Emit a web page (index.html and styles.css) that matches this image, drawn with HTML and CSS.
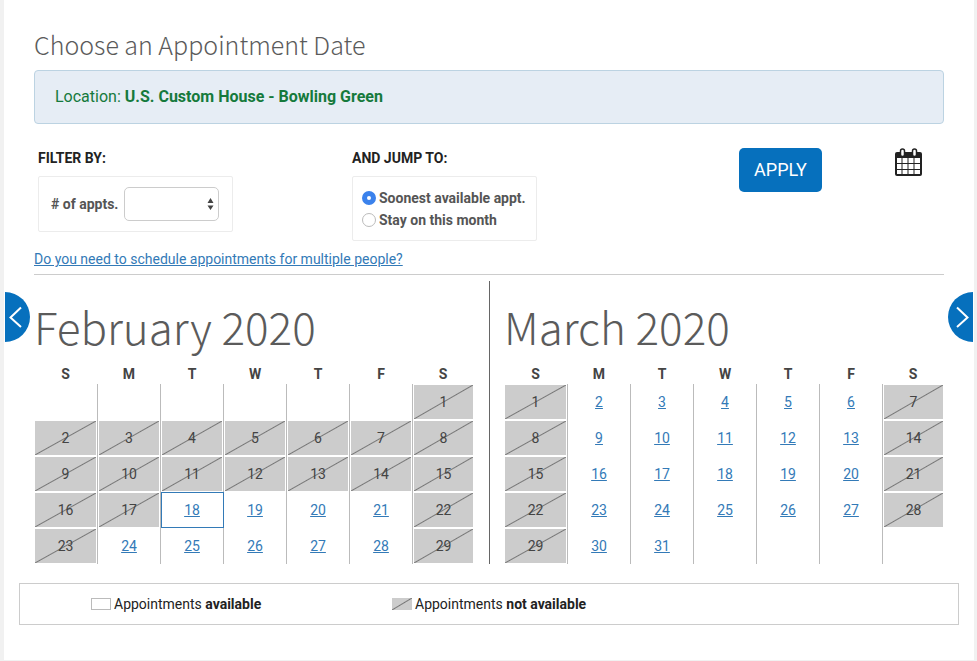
FILE: index.html
```html
<!DOCTYPE html>
<html lang="en">
<head>
    <meta charset="UTF-8">
    <meta name="viewport" content="width=device-width, initial-scale=1.0">
    <title>Choose an Appointment Date</title>
    <link rel="stylesheet" href="styles.css">
</head>
<body>

<main class="page">
    <h1>Choose an Appointment Date</h1>

    <div class="location">Location: <strong>U.S. Custom House - Bowling Green</strong></div>

    <form class="filters">
        <div class="filter-group">
            <h2>FILTER BY:</h2>
            <div class="filter-box appts">
                <label for="appts"># of appts.</label>
                <div class="select-wrap">
                    <select id="appts">
                        <option value=""></option>
                        <option value="1">1</option>
                        <option value="2">2</option>
                        <option value="3">3</option>
                    </select>
                    <svg class="select-arrows" width="7" height="12" viewBox="0 0 7 12" aria-hidden="true">
                        <path d="M3.500 0L6.500 5H0.500zM3.500 12L6.500 7.500H0.500z" fill="#444"/>
                    </svg>
                </div>
            </div>
        </div>

        <div class="filter-group">
            <h2>AND JUMP TO:</h2>
            <div class="filter-box jump">
                <label><input type="radio" name="jump" value="soonest" checked>Soonest available appt.</label>
                <label><input type="radio" name="jump" value="stay">Stay on this month</label>
            </div>
        </div>

        <div class="filter-actions">
            <button type="submit" class="apply-button">APPLY</button>
            <button type="button" class="calendar-button" aria-label="Calendar">
                <svg width="27" height="29" viewBox="0 0 27 29">
                    <path d="M2 4h23q2 0 2 2v20q0 2-2 2H2q-2 0-2-2V6q0-2 2-2z" fill="#222"/>
                    <path d="M2 10h4.500v5H2zM7.500 10h5v5h-5zM13.500 10h5v5h-5zM19.500 10H25v5h-5.500zM2 16h4.500v5H2zM7.500 16h5v5h-5zM13.500 16h5v5h-5zM19.500 16H25v5h-5.500zM2 22h4.500v4H2zM7.500 22h5v4h-5zM13.500 22h5v4h-5zM19.500 22H25v4h-5.500z" fill="#fff"/>
                    <rect x="5.500" y="1" width="4" height="7.500" rx="2" fill="#fff" stroke="#222" stroke-width="1.500"/>
                    <rect x="17.500" y="1" width="4" height="7.500" rx="2" fill="#fff" stroke="#222" stroke-width="1.500"/>
                </svg>
            </button>
        </div>
    </form>

    <a class="help-link" href="#">Do you need to schedule appointments for multiple people?</a>

    <div class="calendars">
        <section class="month">
            <h3>February 2020</h3>
            <table>
                <thead>
                    <tr><th>S</th><th>M</th><th>T</th><th>W</th><th>T</th><th>F</th><th>S</th></tr>
                </thead>
                <tbody>
                    <tr><td></td><td></td><td></td><td></td><td></td><td></td><td><span class="off">1</span></td></tr>
                    <tr><td><span class="off">2</span></td><td><span class="off">3</span></td><td><span class="off">4</span></td><td><span class="off">5</span></td><td><span class="off">6</span></td><td><span class="off">7</span></td><td><span class="off">8</span></td></tr>
                    <tr><td><span class="off">9</span></td><td><span class="off">10</span></td><td><span class="off">11</span></td><td><span class="off">12</span></td><td><span class="off">13</span></td><td><span class="off">14</span></td><td><span class="off">15</span></td></tr>
                    <tr><td><span class="off">16</span></td><td><span class="off">17</span></td><td class="today"><a href="#">18</a></td><td><a href="#">19</a></td><td><a href="#">20</a></td><td><a href="#">21</a></td><td><span class="off">22</span></td></tr>
                    <tr><td><span class="off">23</span></td><td><a href="#">24</a></td><td><a href="#">25</a></td><td><a href="#">26</a></td><td><a href="#">27</a></td><td><a href="#">28</a></td><td><span class="off">29</span></td></tr>
                </tbody>
            </table>
        </section>

        <section class="month">
            <h3>March 2020</h3>
            <table>
                <thead>
                    <tr><th>S</th><th>M</th><th>T</th><th>W</th><th>T</th><th>F</th><th>S</th></tr>
                </thead>
                <tbody>
                    <tr><td><span class="off">1</span></td><td><a href="#">2</a></td><td><a href="#">3</a></td><td><a href="#">4</a></td><td><a href="#">5</a></td><td><a href="#">6</a></td><td><span class="off">7</span></td></tr>
                    <tr><td><span class="off">8</span></td><td><a href="#">9</a></td><td><a href="#">10</a></td><td><a href="#">11</a></td><td><a href="#">12</a></td><td><a href="#">13</a></td><td><span class="off">14</span></td></tr>
                    <tr><td><span class="off">15</span></td><td><a href="#">16</a></td><td><a href="#">17</a></td><td><a href="#">18</a></td><td><a href="#">19</a></td><td><a href="#">20</a></td><td><span class="off">21</span></td></tr>
                    <tr><td><span class="off">22</span></td><td><a href="#">23</a></td><td><a href="#">24</a></td><td><a href="#">25</a></td><td><a href="#">26</a></td><td><a href="#">27</a></td><td><span class="off">28</span></td></tr>
                    <tr><td><span class="off">29</span></td><td><a href="#">30</a></td><td><a href="#">31</a></td><td></td><td></td><td></td><td></td></tr>
                </tbody>
            </table>
        </section>

        <button type="button" class="nav-button prev" aria-label="Previous month">
            <svg width="25" height="50" viewBox="0 0 25 50"><path d="M16 15.500L5.500 25.500L16 35" fill="none" stroke="#fff" stroke-width="2"/></svg>
        </button>
        <button type="button" class="nav-button next" aria-label="Next month">
            <svg width="25" height="50" viewBox="0 0 25 50"><path d="M9 15.500L19.500 25.500L9 35" fill="none" stroke="#fff" stroke-width="2"/></svg>
        </button>
    </div>

    <div class="legend">
        <div class="legend-item"><span class="swatch"></span>Appointments&nbsp;<strong>available</strong></div>
        <div class="legend-item"><span class="swatch off"></span>Appointments&nbsp;<strong>not available</strong></div>
    </div>
</main>

</body>
</html>
```

FILE: styles.css
```css
* {
    box-sizing: border-box;
}

body {
    margin: 0;
    padding: 0 3px 1px 4px;
    background-color: #f1f1f1;
    font-family: Roboto, Arial, sans-serif;
    font-size: 14px;
    line-height: 20px;
    color: #222;
}

.page {
    background-color: white;
    padding: 24px 30px 35px;
}

h1, h3 {
    margin: 0;
    font-family: "Noto Sans CJK SC", sans-serif;
    font-weight: 300;
    color: #5b5b5b;
}

h1 {
    font-size: 25px;
    line-height: 40px;
    margin-bottom: 6px;
}

.location {
    padding: 16px 20px;
    background-color: #e6edf5;
    border: 1px solid #bcd3e2;
    border-radius: 4px;
    font-size: 16px;
    color: #157a3c;
}

/* filters */
.filters {
    display: flex;
    margin-top: 24px;
    padding-left: 4px;
}

.filter-group {
    flex: 0 0 314px;
}

h2 {
    margin: 0 0 8px;
    font-size: 14px;
    line-height: 20px;
    font-weight: bold;
}

.filter-box {
    width: fit-content;
    border: 1px solid #ececec;
    border-radius: 2px;
    font-weight: bold;
    color: #555;
}

.appts {
    display: flex;
    align-items: center;
    gap: 6px;
    padding: 10px 13px 10px 12px;
}

.select-wrap {
    position: relative;
}

select {
    appearance: none;
    display: block;
    width: 95px;
    height: 34px;
    border: 1px solid #ccc;
    border-radius: 5px;
    background-color: white;
    font: inherit;
}

.select-arrows {
    position: absolute;
    right: 5px;
    top: 11px;
    pointer-events: none;
}

.jump {
    padding: 10px 10px 9px 9px;
}

.jump label {
    display: flex;
    align-items: center;
    gap: 3px;
    height: 22px;
}

input[type="radio"] {
    appearance: none;
    width: 14px;
    height: 14px;
    margin: 0;
    border: 1px solid #bbb;
    border-radius: 50%;
    background-color: white;
}

input[type="radio"]:checked {
    border: 5px solid #3b82ec;
}

.filter-actions {
    display: flex;
    flex: 1;
    justify-content: flex-end;
    align-items: flex-start;
    gap: 73px;
    padding-right: 22px;
}

button {
    border: none;
    padding: 0;
    cursor: pointer;
}

.apply-button {
    width: 83px;
    height: 44px;
    padding-bottom: 2px;
    border-radius: 5px;
    background-color: #0670bd;
    color: white;
    font-family: inherit;
    font-size: 18px;
}

.calendar-button {
    background: none;
}

.calendar-button svg, .nav-button svg {
    display: block;
}

.help-link {
    display: inline-block;
    margin-top: 8px;
}

a {
    color: #337ab7;
}

/* calendars */
.calendars {
    display: flex;
    position: relative;
    margin-top: 5px;
    padding-top: 6px;
    border-top: 1px solid #ccc;
}

.month {
    flex: 1 1 0;
    padding-left: 14px;
}

.month:first-child {
    padding-left: 0;
    padding-right: 15px;
    border-right: 1px solid #666;
}

h3 {
    padding-top: 8px;
    font-size: 44px;
    line-height: 75px;
}

table {
    width: 100%;
    table-layout: fixed;
    border-collapse: separate;
    border-spacing: 0;
    text-align: center;
}

th {
    height: 20px;
    padding: 0 1px 0 0;
    line-height: 20px;
    color: #444;
}

th:first-child {
    width: 64px;
}

th:last-child {
    width: 61px;
}

td {
    height: 36px;
    padding: 1px;
    border-right: 1px solid #bbb;
}

td:last-child {
    border-right: none;
}

/* grey cell with a line from the lower left to the upper right corner */
.off {
    background: #ccc linear-gradient(to bottom right, transparent calc(50% - 1px), #777 50%, transparent calc(50% + 1px));
}

td .off {
    display: block;
    line-height: 34px;
    color: #444;
}

.today {
    outline: 1px solid #337ab7;
    outline-offset: -1px;
}

.nav-button {
    position: absolute;
    top: 17px;
    background-color: #0670bd;
}

.prev {
    left: -29px;
    border-radius: 0 25px 25px 0;
}

.next {
    right: -29px;
    border-radius: 25px 0 0 25px;
}

/* legend */
.legend {
    display: flex;
    margin: 19px -15px 0;
    padding: 10px 71px;
    border: 1px solid #ccc;
}

.legend-item {
    display: flex;
    align-items: center;
    flex: 0 0 301px;
}

.swatch {
    width: 20px;
    height: 12px;
    margin-right: 3px;
    border: 1px solid #bbb;
}

.swatch.off {
    border: none;
}
```
